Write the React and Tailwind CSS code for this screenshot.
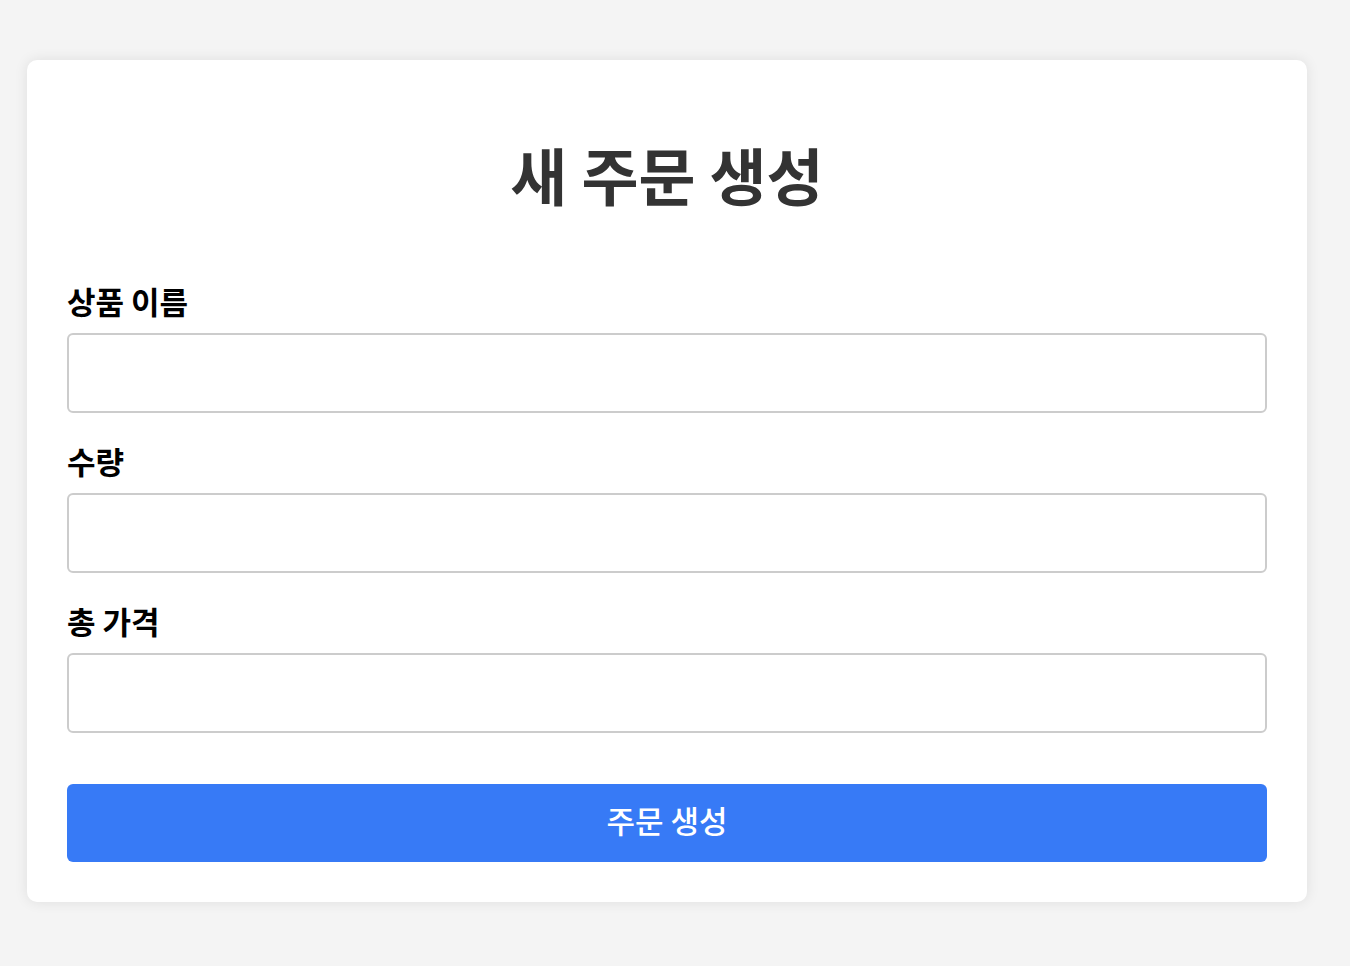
export default function App() {
  const fields = ["상품 이름", "수량", "총 가격"];
  return (
    <div
      className="min-h-[966px] w-full bg-[#f4f4f4] pt-[60px] px-[27px]"
      style={{ fontFamily: '"Noto Sans CJK KR", "Noto Sans", sans-serif' }}
    >
      <div className="w-[1280px] rounded-[10px] bg-white p-[40px] shadow-[0_0_14px_rgba(0,0,0,0.09)]">
        <h1 className="mt-[34px] mb-[67px] text-center text-[62px] leading-[80px] font-bold text-[#333333]">
          새 주문 생성
        </h1>
        {fields.map((f) => (
          <div key={f} className="mb-[28px]">
            <label className="mb-[12px] block text-[31px] leading-[40px] font-bold text-black">
              {f}
            </label>
            <input
              type="text"
              className="block h-[80px] w-full rounded-[6px] border-2 border-[#cccccc] bg-white px-3 outline-none"
            />
          </div>
        ))}
        <button className="mt-[51px] block h-[78px] w-full rounded-[6px] bg-[#377af6] pb-[6px] text-[31px] leading-[40px] font-medium text-white">
          주문 생성
        </button>
      </div>
    </div>
  );
}
